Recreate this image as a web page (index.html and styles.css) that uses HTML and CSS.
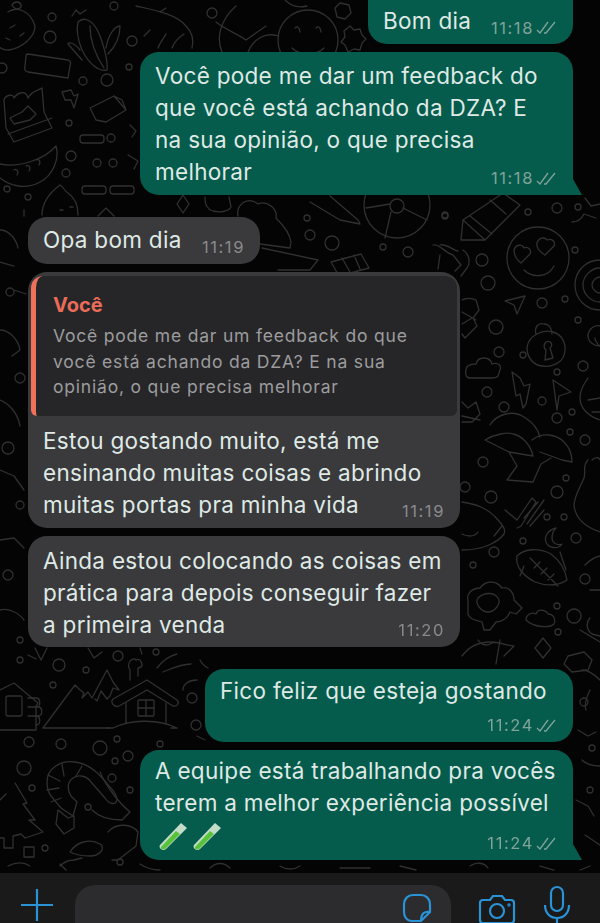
FILE: index.html
```html
<!DOCTYPE html>
<html lang="pt-BR">
<head>
    <meta charset="UTF-8">
    <meta name="viewport" content="width=device-width, initial-scale=1.0">
    <title>Conversa</title>
    <link rel="stylesheet" href="styles.css">
</head>
<body>
    <!-- Papel de parede com desenhos -->
    <svg class="wallpaper" viewBox="0 0 600 923" aria-hidden="true">
        <g fill="none" stroke="#303030" stroke-width="1.3" stroke-linecap="round" stroke-linejoin="round">
            <!-- canto superior esquerdo -->
            <path d="M8 12c8-6 22-2 27 14 0 12-14 22-26 24-6 0-10-2-12-6M12 5c2-4 8-4 9 0s-6 6-9 0M10 28l5-3M20 36l4-3M6 38l4 2"/>
            <path d="M78 22c6-6 16-2 22 14 5 14 8 26 7 34-8 2-18-6-25-20-4-10-6-20-4-28zM90 26c0 14 6 30 14 42M72 16l4-6 4 4 6-4"/>
            <path d="M80 50c-6-8-12-8-12-6l14 16M106 48c2-12 8-22 14-22 0 12-6 22-12 28"/>
            <path d="M28 54l40 6c3 1 3 3 2 6l-2 12-40-6c-3-1-4-3-3-6l1-10c0-1 1-2 2-2z"/>
            <path d="M4 100c2-6 10-6 10-2 4-6 12-8 14 0 4-8 12-8 14-10l2 24 8 16-38 14-8-14zM10 118l12-6 6-6 8 8-6 6-16 4zM8 134l44-16"/>
            <path d="M62 92l9-2 3 6 4-2-4 14-3-8-6 0z"/>
            <path d="M90 108l24-12 8 4 4 10-20 12-10-2z M114 96l12 14"/>
            <path d="M0 164c18 4 44-4 56-18 4 14-4 30-16 36-14 8-30 4-40-4M14 170c3-2 5 2 3 5M26 166c3-2 5 2 3 5M36 160c3-2 5 2 3 5"/>
            <rect x="80" y="135" width="24" height="8" rx="3"/>
            <rect x="82" y="186" width="24" height="8" rx="3"/>
            <rect x="110" y="186" width="24" height="8" rx="3"/>
            <path d="M42 215c0-14 10-24 18-30 4 2 4 6 8 8 6 4 10 12 10 22M130 125l6 6-4 6M128 155l10 6-4 8"/>
            <path d="M60 210l3 0M70 207l3 0M98 216l8-8 8 8M24 210v6"/>
            <circle cx="50" cy="37" r="6"/><circle cx="52" cy="17" r="4"/><circle cx="132" cy="41" r="5"/><circle cx="114" cy="6" r="4"/>
            <circle cx="107" cy="80" r="6"/><circle cx="83" cy="81" r="4"/><circle cx="129" cy="67" r="3"/><circle cx="69" cy="123" r="3"/>
            <circle cx="111" cy="138" r="4"/><circle cx="71" cy="156" r="5"/><circle cx="97" cy="163" r="4"/><circle cx="113" cy="163" r="4"/>
            <circle cx="66" cy="173" r="4"/><circle cx="7" cy="189" r="3"/><circle cx="28" cy="197" r="3"/><circle cx="2" cy="68" r="5"/>
            <!-- topo -->
            <path d="M136 6c18 4 40 8 50 20 6 6 8 14 6 22M158 48c2-6 6-10 8-14M172 48c2-6 6-10 12-14M150 30l-6 6M166 8l-6 4"/>
            <path d="M222 52c-6-14-2-32 14-46M216 22c10 8 22 12 30 18l20-14M248 52c6-14 18-20 30-16"/>
            <circle cx="212" cy="13" r="5"/>
            <circle cx="308" cy="40" r="30"/>
            <path d="M295 28c2-2 4-2 5 4M316 28c2-2 4-2 5 4M292 48c8 8 24 8 32 0"/>
            <path d="M350 26l4 4 6-1 2 6 4 4-4 4-2 7-6-1-6 3-3-7-4-3 4-5-1-6z"/>
            <path d="M335 8l5-5 9 2 2 8-6 6-8-2z"/>
            <path d="M285 0c6 6 14 8 22 6"/>
            <!-- faixa sob a segunda mensagem -->
            <path d="M183 195l6 9-6 9-6-9z"/>
            <path d="M205 197c0 8 2 12 8 14 8 2 16 0 18-4l-2-10"/>
            <circle cx="397" cy="205" r="33"/><circle cx="397" cy="206" r="7"/>
            <path d="M391 212l-6 26M403 208l24 12M390 204l-24 4"/>
            <path d="M330 196l28 24 2 4-20-4-30-18"/>
            <path d="M238 216c-2-12 10-20 20-12 8-4 20 4 18 14 8 8 14 16 15 24l-1 6-30-4"/>
            <path d="M262 248l56 12-8 10h-32M331 262l30-8 8 14-30 8zM342 258l8 14M354 255l6 14"/>
            <circle cx="310" cy="235" r="5"/><circle cx="332" cy="243" r="7"/><circle cx="307" cy="218" r="3"/>
            <circle cx="383" cy="247" r="3"/><circle cx="408" cy="252" r="5"/><circle cx="445" cy="215" r="3"/>
            <path d="M433 245c6-2 12 8 20 10l8 10-6 6M440 255l-2 14"/>
            <!-- lapis e carinha apaixonada -->
            <path d="M461 240l2-20 40-27 17 12-35 35zM463 220l22 20M470 216l22 18M490 200l16 14"/>
            <circle cx="538" cy="258" r="31"/>
            <path d="M514 250c2-6 8-6 10-2 4-2 8 2 6 6l-9 9c-4-3-7-8-7-13zM537 243c2-6 8-6 10-3 4-2 9 1 7 6l-9 9c-5-3-9-7-8-12zM524 270c8 8 24 8 30-4"/>
            <path d="M600 260c-14 0-25 11-25 25s11 25 25 25M600 268c-9 0-17 8-17 17s8 17 17 17M600 277c-4 0-8 4-8 8s4 8 8 8"/>
            <path d="M585 198l6 8 9-2M572 222c6 0 10-4 12-8l12 4"/>
            <path d="M505 301l20-5-8 18-3-9z"/>
            <path d="M462 300c4-2 10-2 14 0l3 10-6 8 4 8-12 12-3-4M462 312l14 8M462 324l10-6"/>
            <path d="M440 245c6-2 14 6 18 6M463 250c6 4 8 12 4 18l-6 8"/>
            <path d="M536 334c-2-6 2-12 8-10 6 0 8 6 8 10M537 334c10-6 22-2 26 6 4 8 2 18-4 22-8 6-22 6-28-2-6-8-6-20 6-26zM546 342c4-2 8 2 4 6l3 10-8 2 1-10c-3-2-2-6 0-8z"/>
            <path d="M600 326c-6-2-12 4-12 10s6 10 12 10c-3-2-5-6-5-8"/>
            <path d="M466 370c0-6 8-6 10-6 2-8 14-8 16 0 6-2 10 2 8 6s0 8-8 8h-22c-4 0-5-4-4-8z"/>
            <path d="M512 372l8 6 4 8 6-2-4 20-3 4-3-14-4 2z"/>
            <path d="M553 380l18 12-12 4-2 14z"/>
            <path d="M462 402l6 6 8-6 4 12-8 8h-10M462 416l18 4"/>
            <path d="M490 425c6-10 22-16 34-8 10 6 14 12 16 20M588 378c-4 6-8 12-8 20 0 10 8 18 20 22M588 400l12-2M592 412l8 0"/>
            <circle cx="482" cy="260" r="6"/><circle cx="488" cy="283" r="7"/><circle cx="542" cy="303" r="5"/><circle cx="565" cy="299" r="3"/>
            <circle cx="496" cy="327" r="7"/><circle cx="499" cy="352" r="5"/><circle cx="523" cy="355" r="3"/><circle cx="578" cy="320" r="3"/>
            <circle cx="575" cy="250" r="3"/><circle cx="528" cy="212" r="3"/><circle cx="557" cy="208" r="5"/><circle cx="578" cy="207" r="3"/>
            <circle cx="445" cy="216" r="3"/><circle cx="583" cy="366" r="5"/><circle cx="487" cy="392" r="5"/><circle cx="504" cy="407" r="5"/>
            <circle cx="542" cy="401" r="4"/><circle cx="557" cy="372" r="3"/><circle cx="557" cy="418" r="5"/><circle cx="572" cy="412" r="3"/><circle cx="570" cy="432" r="3"/>
            <!-- bonés, bola e tartaruga -->
            <path d="M485 440c10-6 22-8 28-6 10 2 18 12 20 22l-24-4zM532 440c10-8 24-6 32 2 6 6 8 14 8 20l-10-2-22-8M509 452l8 14-10 14 26 2 8-18 10-6"/>
            <path d="M505 510l12 10 15-22 4 4-15 24-4 2M524 518l14-16M527 524l17-24M530 526l14-16"/>
            <path d="M556 528c-8 2-12 8-10 14s12 8 16 2c-6 2-10-2-10-6 0-4 2-8 4-10z"/>
            <path d="M462 502c14 2 26 6 36 18 6 6 8 10 6 14-6 8-20 16-42 16M462 534c4 2 12 4 16-2M494 536l8-10"/>
            <path d="M517 556c8-8 22-8 34-2 8 6 14 14 16 26-8 6-22 6-32 2-12-6-20-16-18-26zM524 566l-4 10M530 558l28 28M534 568l6-6M541 574l6-6M548 580l6-6M560 552l6 18"/>
            <path d="M468 600c-2-6 4-12 12-12 6-8 16-8 22 0 6-2 12 4 12 12l8 8-6 6-6-2c-2 6-8 10-14 10l-6 8h-6l-2-8c-6-2-12-2-14-8z M478 598c6-6 16-6 20 0s-4 14-10 14-14-8-10-14z"/>
            <path d="M526 620c0-6 6-8 10-6 2-6 10-4 12 0 6 0 8 6 6 10-4 4-20 4-28-4z"/>
            <path d="M543 638l8 10-8 10-8-10z"/>
            <path d="M568 656l16-4 8 8-4 10-16 2-8-8z"/>
            <path d="M462 656c6-8 16-14 28-14 10 0 18 4 24 4l-10 10M500 640l-4 24M478 640c4 6 10 6 16 2"/>
            <path d="M588 460c-6 6-2 12-4 18-4 10-10 18-10 28 2 14 14 22 26 26M592 460c4-4 8-2 8 0M585 565c5-5 10-8 15-9M590 590h10M590 618c-4 4-4 12 2 16l8 2M580 630l20 12"/>
            <circle cx="483" cy="462" r="5"/><circle cx="491" cy="497" r="6"/><circle cx="557" cy="492" r="6"/><circle cx="566" cy="478" r="3"/>
            <circle cx="547" cy="517" r="3"/><circle cx="564" cy="517" r="3"/><circle cx="523" cy="541" r="3"/><circle cx="576" cy="538" r="5"/>
            <circle cx="494" cy="552" r="5"/><circle cx="473" cy="565" r="3"/><circle cx="585" cy="579" r="5"/><circle cx="574" cy="616" r="7"/>
            <circle cx="557" cy="606" r="3"/><circle cx="558" cy="632" r="3"/><circle cx="585" cy="440" r="5"/><circle cx="465" cy="487" r="5"/>
            <!-- borda esquerda -->
            <path d="M0 230c8 0 16 8 18 18M0 262l14 4M0 330c8 0 18 8 20 20l-8 6M14 290l12 4M0 400c10 4 18 14 20 26M0 470l14 6 10 14M0 540l14-2 10 10M0 610c8-2 18 2 24 10"/>
            <circle cx="10" cy="292" r="4"/><circle cx="20" cy="378" r="5"/><circle cx="8" cy="448" r="6"/><circle cx="20" cy="505" r="4"/><circle cx="8" cy="575" r="5"/><circle cx="20" cy="640" r="3"/>
            <!-- faixa entre mensagens -->
            <path d="M35 648l6 12 6-12M88 648l6 10 8-6M140 648l2 6M200 660c2 4 4 6 8 8M28 655l8 4"/>
            <circle cx="118" cy="656" r="5"/><circle cx="156" cy="652" r="3"/>
            <!-- chalé -->
            <path d="M0 690l14-7 24 20-2 3 0 24H0"/>
            <rect x="6" y="696" width="16" height="20" rx="2"/>
            <path d="M28 698h8c5 0 5 9 0 9h-8M28 707h10c5 0 5 9 0 9H28M28 716h8c5 0 5 9 0 9"/>
            <!-- montanhas e casa -->
            <path d="M43 728l32-43 4 4 5 4-2 5 6-6 4 6 15-28 6 12 6 8-6-2-3 8-3 3-6-8-4 10-2-2M43 728h66"/>
            <path d="M113 699l34-19 30 20c3 3 0 7-4 6l-26-16-28 16c-5 2-9-4-6-7z"/>
            <path d="M126 703v20M166 703v20M113 728c16-8 44-10 64 0M113 728h-6M177 728h-6"/>
            <path d="M130 680v-10c-4-6 2-14 6-10 4-2 6 2 6 6-2 2-4 2-4 2v8"/>
            <rect x="138" y="700" width="16" height="16" rx="1"/>
            <path d="M146 700v16M138 708h16"/>
            <path d="M157 668c6-8 12-12 20-14M163 672c10-4 18-8 28-8M183 690c0-6 6-10 14-10M205 740l-8-4"/>
            <circle cx="196" cy="725" r="5"/><circle cx="192" cy="698" r="5"/><circle cx="160" cy="744" r="3"/>
            <circle cx="20" cy="660" r="3"/><circle cx="59" cy="665" r="6"/><circle cx="86" cy="670" r="3"/><circle cx="53" cy="685" r="3"/>
            <circle cx="29" cy="742" r="5"/><circle cx="61" cy="744" r="5"/><circle cx="100" cy="748" r="7"/><circle cx="117" cy="739" r="3"/>
            <circle cx="115" cy="761" r="3"/><circle cx="24" cy="768" r="7"/><circle cx="32" cy="788" r="3"/><circle cx="88" cy="807" r="3"/><circle cx="45" cy="848" r="3"/>
            <!-- camarão -->
            <path d="M47 782c0-14 14-22 28-20 16 2 26 14 34 24 6 6 8 10 8 14-2 6-8 4-12-2l-14-16c-4-6-12-8-18-4-6 4-6 12-2 18l6 6-4 14-12-8-10-12c-3-4-4-8-4-14z"/>
            <path d="M48 775l12 6M47 790l12-2M51 802l10-4M62 764l2 12M82 766l-6 10M100 772c6 14 18 30 30 40l-8 8c-14 0-24-4-30-10"/>
            <path d="M58 810l10 8 6-2 0 12-10 6-8-10z"/>
            <!-- pinheiro e cogumelo -->
            <path d="M15 783l12 20-4 1 12 16-6 0 14 12-18 6-4-4-8 2v12H4v-10H0M0 800l6-6"/>
            <path d="M24 847h10v10H24z"/>
            <path d="M70 852c6-10 20-14 30-8 6 4 0 12-10 12-8 0-16-2-20-4zM82 858l-8 2M60 866c4-4 8-6 14-6"/>
            <path d="M108 832c8-10 24-8 30 0l-2 14-18 14h-6"/>
            <circle cx="120" cy="862" r="3"/><circle cx="112" cy="778" r="4"/><circle cx="128" cy="756" r="5"/><circle cx="130" cy="790" r="3"/>
            <!-- faixa inferior -->
            <path d="M8 866c8-4 16-4 22 0M60 864l6 6M140 864c6 4 12 6 20 6M210 868c6-6 14-6 20 0M280 866c6 4 14 4 20 0M340 868h30M400 866l16 4M470 866c6-4 14-4 18 2M540 866l14 4M590 866l-10 4"/>
            <!-- direita inferior -->
            <path d="M590 690c-4 8-6 14-4 20M582 670c6 0 12 4 18 10M578 730l10 6 8-4M582 760c4 4 10 6 18 6M576 800l12 6 6 10M585 835l15 10"/>
            <circle cx="592" cy="748" r="3"/><circle cx="584" cy="702" r="4"/><circle cx="590" cy="790" r="3"/>
        </g>
    </svg>

    <main class="chat">
        <div class="bubble out first" style="width: 205px">
            <div class="line"><span class="text">Bom dia</span><span class="meta">11:18 <svg class="ticks" viewBox="0 0 22 14"><path d="M1 9l3 3 8-11M8 12l2 0 9-11"/></svg></span></div>
        </div>

        <div class="bubble out tail pad-a" style="width: 433px">
            <p class="text">Você pode me dar um feedback do<br>que você está achando da DZA? E<br>na sua opinião, o que precisa<br>melhorar</p>
            <span class="meta over">11:18 <svg class="ticks" viewBox="0 0 22 14"><path d="M1 9l3 3 8-11M8 12l2 0 9-11"/></svg></span>
        </div>

        <div class="bubble in gap-big" style="width: 232px">
            <div class="line"><span class="text">Opa bom dia</span><span class="meta">11:19</span></div>
        </div>

        <div class="bubble in quoted" style="width: 432px">
            <div class="quote">
                <strong class="quote-name">Você</strong>
                <p class="quote-text">Você pode me dar um feedback do que<br>você está achando da DZA? E na sua<br>opinião, o que precisa melhorar</p>
            </div>
            <p class="text">Estou gostando muito, está me<br>ensinando muitas coisas e abrindo<br>muitas portas pra minha vida</p>
            <span class="meta over">11:19</span>
        </div>

        <div class="bubble in pad-b" style="width: 432px">
            <p class="text">Ainda estou colocando as coisas em<br>prática para depois conseguir fazer<br>a primeira venda</p>
            <span class="meta over">11:20</span>
        </div>

        <div class="bubble out gap-big pad-c" style="width: 368px">
            <p class="text">Fico feliz que esteja gostando</p>
            <span class="meta over">11:24 <svg class="ticks" viewBox="0 0 22 14"><path d="M1 9l3 3 8-11M8 12l2 0 9-11"/></svg></span>
        </div>

        <div class="bubble out tail pad-d" style="width: 433px">
            <p class="text">A equipe está trabalhando pra vocês<br>terem a melhor experiência possível</p>
            <div class="tubes">
                <svg class="tube" viewBox="0 0 30 30"><path class="glass" d="M23 1L2 23c-2 3 3 7 6 4L29 6z"/><path class="liquid" d="M18 9L3 25c-1 2 2 3 4 2L22 12z"/></svg>
                <svg class="tube" viewBox="0 0 30 30"><path class="glass" d="M23 1L2 23c-2 3 3 7 6 4L29 6z"/><path class="liquid" d="M18 9L3 25c-1 2 2 3 4 2L22 12z"/></svg>
            </div>
            <span class="meta over">11:24 <svg class="ticks" viewBox="0 0 22 14"><path d="M1 9l3 3 8-11M8 12l2 0 9-11"/></svg></span>
        </div>
    </main>

    <footer class="composer">
        <svg class="icon plus" viewBox="0 0 34 34"><path d="M17 1v32M1 17h32"/></svg>
        <div class="field">
            <svg class="icon sticker" viewBox="0 0 32 32"><path d="M20 29h-9C6 29 3 25 3 20v-8c0-5 4-9 9-9h8c5 0 9 4 9 9v8zM29 20c-5-1-9 1-9 9"/></svg>
        </div>
        <svg class="icon camera" viewBox="0 0 38 32"><path d="M5 7h7l3-4h9l3 4h6c2 0 3 1 3 3v17c0 2-1 3-3 3H5c-2 0-3-1-3-3V10c0-2 1-3 3-3z"/><circle cx="19" cy="18" r="7"/><circle cx="31" cy="12" r=".6"/></svg>
        <svg class="icon mic" viewBox="0 0 28 40"><rect x="8" y="2" width="12" height="24" rx="6"/><path d="M2 20c0 8 5 13 12 13s12-5 12-13M14 33v7"/></svg>
    </footer>
</body>
</html>
```

FILE: styles.css
```css
html, body {
    height: 100%;
}
body {
    position: relative;
    margin: 0;
    width: 600px;
    height: 923px;
    overflow: hidden;
    background: #040404;
    font-family: "Inter", "Liberation Sans", sans-serif;
    color: #e6ebe8;
    display: flex;
    flex-direction: column;
}
.wallpaper {
    position: absolute;
    top: 0;
    left: 0;
    width: 600px;
    height: 923px;
    filter: blur(0.6px);
}
.chat {
    position: relative;
    flex: 1;
    display: flex;
    flex-direction: column;
    gap: 8px;
    padding: 0 27px 0 28px;
    filter: blur(0.55px);
}
.bubble {
    position: relative;
    box-sizing: border-box;
    border-radius: 19px;
    padding: 7px 15px 8px 15px;
}
.first {
    height: 44px;
    padding-top: 5px;
    border-radius: 0 0 19px 19px;
}
.gap-big {
    margin-top: 14px;
}
.pad-a {
    padding-top: 8px;
    padding-bottom: 7px;
}
.pad-b {
    padding-top: 9px;
    padding-bottom: 6px;
}
.pad-c {
    padding-top: 6px;
    padding-bottom: 35px;
}
.pad-d {
    padding-top: 5px;
    padding-bottom: 6px;
}
.out {
    align-self: flex-end;
    background: #065c4c;
}
.in {
    align-self: flex-start;
    background: #3a3a3c;
}
.tail {
    border-bottom-right-radius: 4px;
}
.tail::after {
    content: "";
    position: absolute;
    right: -9px;
    bottom: 0;
    width: 18px;
    height: 16px;
    background: #065c4c;
    clip-path: polygon(0 0, 50% 0, 100% 100%, 0 100%);
}
.text {
    margin: 0;
    font-size: 22.5px;
    line-height: 32px;
    letter-spacing: 0.3px;
    color: #dfe9e5;
    white-space: nowrap;
}
.line {
    display: flex;
    align-items: center;
    justify-content: space-between;
}
.meta {
    font-size: 16.5px;
    line-height: 17px;
    letter-spacing: 1.6px;
    color: #7fa399;
    white-space: nowrap;
    display: inline-flex;
    align-items: center;
    gap: 2px;
    padding-top: 14px;
}
.in .meta {
    color: #8a8a8c;
}
.over {
    position: absolute;
    right: 15px;
    bottom: 8px;
    padding-top: 0;
}
.ticks {
    width: 22px;
    height: 14px;
    fill: none;
    stroke: #7fa399;
    stroke-width: 1.3;
}
.quoted {
    padding: 4px 3px 7px;
}
.quoted .text {
    padding: 9px 12px 0;
}
.quote {
    box-sizing: border-box;
    height: 140px;
    padding: 17px 10px 0 17px;
    background: #262628;
    border-left: 5px solid #f0705a;
    border-radius: 12px 12px 6px 6px;
}
.quote-name {
    display: block;
    font-size: 20px;
    line-height: 24px;
    font-weight: 700;
    color: #ea6b58;
}
.quote-text {
    margin: 6px 0 0;
    font-size: 17.5px;
    line-height: 25.5px;
    letter-spacing: 0.8px;
    color: #9c9c9e;
    white-space: nowrap;
}
.tubes {
    display: flex;
    gap: 4px;
    margin: 3px 0 0 3px;
    height: 32px;
}
.tube {
    width: 30px;
    height: 30px;
}
.glass {
    fill: #c3dcc8;
}
.liquid {
    fill: #58c23a;
}
.composer {
    position: relative;
    box-sizing: border-box;
    height: 50px;
    padding: 12px 0 0 20px;
    background: #1a1a1a;
    display: flex;
    align-items: flex-start;
    overflow: hidden;
    filter: blur(0.4px);
}
.field {
    box-sizing: border-box;
    width: 376px;
    height: 60px;
    margin-left: 21px;
    padding: 7px 0 0 326px;
    background: #2c2c2e;
    border-radius: 20px;
}
.icon {
    flex: none;
    fill: none;
    stroke: #2a93d5;
    stroke-width: 2.2;
}
.plus {
    width: 34px;
    height: 34px;
    margin-top: 3px;
}
.sticker {
    width: 32px;
    height: 32px;
}
.camera {
    width: 38px;
    height: 32px;
    margin: 8px 0 0 27px;
}
.mic {
    width: 28px;
    height: 40px;
    margin: 0 0 0 27px;
}
```
